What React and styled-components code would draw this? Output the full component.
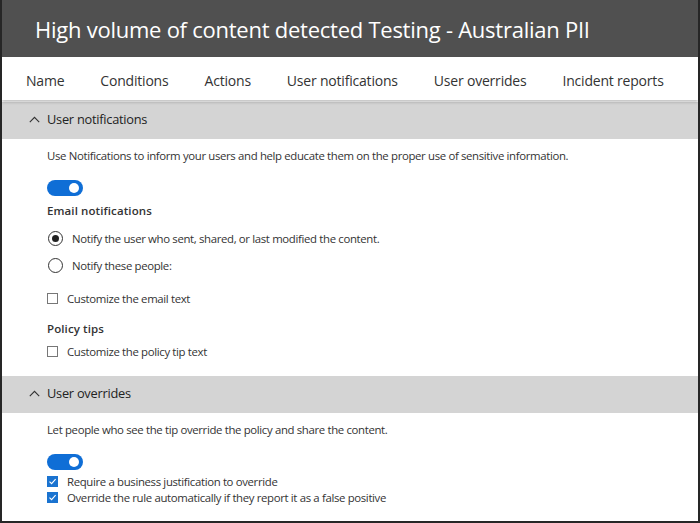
import React from 'react'
import styled, { createGlobalStyle } from 'styled-components'

const GlobalStyle = createGlobalStyle`
  html, body {
    margin: 0;
    padding: 0;
    background: #ffffff;
  }
  body {
    font-family: "Open Sans", "Noto Sans", sans-serif;
    color: #252525;
  }
`

const Frame = styled.div`
  width: 700px;
  height: 523px;
  box-sizing: border-box;
  border: 2px solid #262626;
  border-top: none;
  overflow: hidden;
  background: #ffffff;
`

const TitleBar = styled.div`
  height: 57px;
  background: #505050;
  color: #ffffff;
  display: flex;
  align-items: center;
  padding-left: 33px;
  font-size: 22px;
  letter-spacing: -0.25px;
`

const Tabs = styled.div`
  height: 43px;
  box-sizing: border-box;
  padding-top: 3px;
  display: flex;
  align-items: center;
  padding-left: 24px;
  gap: 36px;
  box-shadow: 0 2px 3px rgba(0, 0, 0, 0.25);
  position: relative;
  z-index: 1;
`

const Tab = styled.div`
  font-size: 14px;
  color: #333;
  letter-spacing: -0.2px;
`

const SectionHeader = styled.div`
  height: 37px;
  box-sizing: border-box;
  padding-bottom: 3px;
  margin-top: ${p => p.top || 0}px;
  background: #d4d4d4;
  display: flex;
  align-items: center;
  padding-left: 27px;
  gap: 7px;
  font-size: 12.8px;
  letter-spacing: -0.25px;
  color: #222;
`

const Body = styled.div`
  padding: 0 0 0 45px;
  display: flex;
  flex-direction: column;
`

const Description = styled.div`
  font-size: 11.4px;
  line-height: 16px;
  color: #333;
  margin-top: ${p => p.top}px;
  letter-spacing: -0.35px;
`

const Toggle = styled.div`
  width: 36px;
  height: 16px;
  border-radius: 8px;
  background: #0f6ed6;
  margin-top: ${p => p.top}px;
  position: relative;
  &::after {
    content: '';
    position: absolute;
    right: 4px;
    top: 3px;
    width: 10px;
    height: 10px;
    border-radius: 50%;
    background: #ffffff;
  }
`

const Label = styled.div`
  font-size: 11.5px;
  line-height: 16px;
  font-weight: 600;
  color: #333;
  margin-top: ${p => p.top}px;
  letter-spacing: 0.1px;
`

const Row = styled.div`
  display: flex;
  align-items: center;
  height: 16px;
  gap: 9px;
  margin-top: ${p => p.top}px;
  font-size: 11.4px;
  color: #333;
  letter-spacing: -0.35px;
`

const Radio = styled.span`
  width: 13px;
  height: 13px;
  border-radius: 50%;
  border: 1px solid #333;
  margin-left: 1px;
  display: flex;
  align-items: center;
  justify-content: center;
  flex-shrink: 0;
  &::after {
    content: '';
    width: 7px;
    height: 7px;
    border-radius: 50%;
    background: ${p => (p.checked ? '#222' : 'transparent')};
  }
`

const Box = styled.span`
  width: 11px;
  height: 11px;
  box-sizing: border-box;
  border: 1px solid ${p => (p.checked ? '#1a73d0' : '#777')};
  background: ${p => (p.checked ? '#1a73d0' : '#fff')};
  display: flex;
  align-items: center;
  justify-content: center;
  flex-shrink: 0;
`

function Check({ checked }) {
  return (
    <Box checked={checked}>
      {checked && (
        <svg width="9" height="9" viewBox="0 0 9 9">
          <path d="M1.5 4.6 L3.6 6.6 L7.6 2.2" fill="none" stroke="#fff" strokeWidth="1.1" />
        </svg>
      )}
    </Box>
  )
}

function Chevron() {
  return (
    <svg width="11" height="7" viewBox="0 0 11 7">
      <path d="M0.8 6.2 L5.5 1.3 L10.2 6.2" fill="none" stroke="#333" strokeWidth="1.1" />
    </svg>
  )
}

const tabs = ['Name', 'Conditions', 'Actions', 'User notifications', 'User overrides', 'Incident reports']

export default function App() {
  return (
    <Frame>
      <GlobalStyle />
      <TitleBar>High volume of content detected Testing - Australian PII</TitleBar>
      <Tabs>
        {tabs.map(t => (
          <Tab key={t}>{t}</Tab>
        ))}
      </Tabs>
      <SectionHeader top={2}>
        <Chevron />
        User notifications
      </SectionHeader>
      <Body>
        <Description top={9}>
          Use Notifications to inform your users and help educate them on the proper use of sensitive information.
        </Description>
        <Toggle top={16} />
        <Label top={7}>Email notifications</Label>
        <Row top={11}>
          <Radio checked />
          Notify the user who sent, shared, or last modified the content.
        </Row>
        <Row top={11}>
          <Radio />
          Notify these people:
        </Row>
        <Row top={17}>
          <Check />
          Customize the email text
        </Row>
        <Label top={15}>Policy tips</Label>
        <Row top={6}>
          <Check />
          Customize the policy tip text
        </Row>
      </Body>
      <SectionHeader top={17}>
        <Chevron />
        User overrides
      </SectionHeader>
      <Body>
        <Description top={9}>
          Let people who see the tip override the policy and share the content.
        </Description>
        <Toggle top={16} />
        <Row top={3}>
          <Check checked />
          Require a business justification to override
        </Row>
        <Row top={0}>
          <Check checked />
          Override the rule automatically if they report it as a false positive
        </Row>
      </Body>
    </Frame>
  )
}
